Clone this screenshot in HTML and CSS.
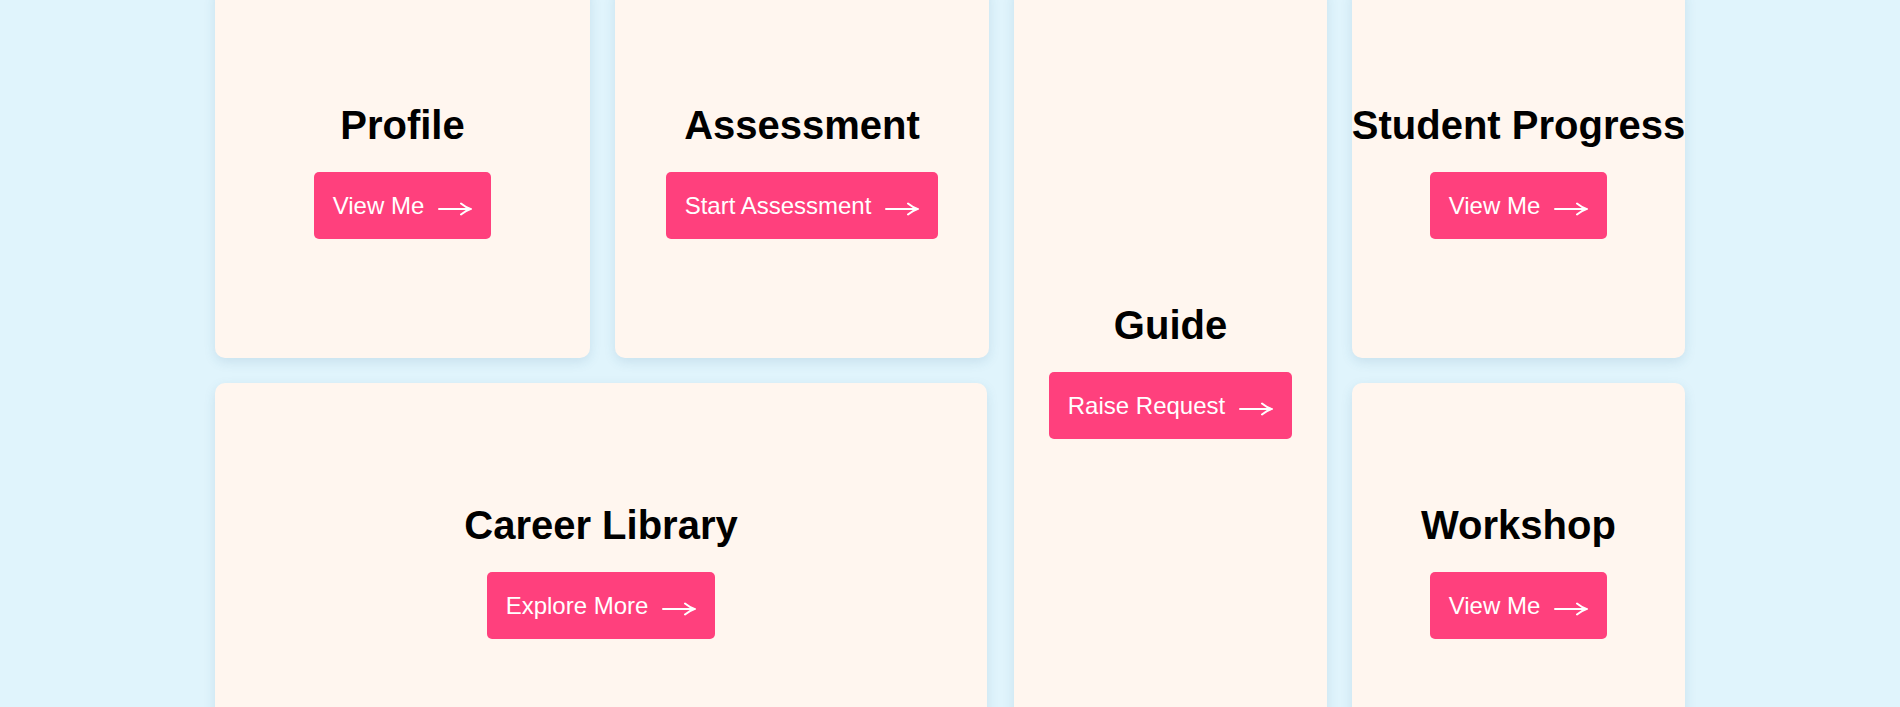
FILE: index.html
```html
<!DOCTYPE html>
<html lang="en">
<head>
<meta charset="utf-8">
<title>Dashboard</title>
<link rel="stylesheet" href="styles.css">
</head>
<body>
<main class="dashboard">
  <section class="card card-profile">
    <h2 class="card-title">Profile</h2>
    <a class="card-btn" href="#">View Me
      <svg class="arrow" viewBox="0 0 34 16" width="34" height="16"><path d="M1 8H32M23 2.5Q28 6.5 32.5 8Q28 9.5 23 13.5" fill="none" stroke="#fff" stroke-width="2" stroke-linecap="round"/></svg>
    </a>
  </section>
  <section class="card card-assessment">
    <h2 class="card-title">Assessment</h2>
    <a class="card-btn" href="#">Start Assessment
      <svg class="arrow" viewBox="0 0 34 16" width="34" height="16"><path d="M1 8H32M23 2.5Q28 6.5 32.5 8Q28 9.5 23 13.5" fill="none" stroke="#fff" stroke-width="2" stroke-linecap="round"/></svg>
    </a>
  </section>
  <section class="card card-guide">
    <h2 class="card-title">Guide</h2>
    <a class="card-btn" href="#">Raise Request
      <svg class="arrow" viewBox="0 0 34 16" width="34" height="16"><path d="M1 8H32M23 2.5Q28 6.5 32.5 8Q28 9.5 23 13.5" fill="none" stroke="#fff" stroke-width="2" stroke-linecap="round"/></svg>
    </a>
  </section>
  <section class="card card-progress">
    <h2 class="card-title">Student Progress</h2>
    <a class="card-btn" href="#">View Me
      <svg class="arrow" viewBox="0 0 34 16" width="34" height="16"><path d="M1 8H32M23 2.5Q28 6.5 32.5 8Q28 9.5 23 13.5" fill="none" stroke="#fff" stroke-width="2" stroke-linecap="round"/></svg>
    </a>
  </section>
  <section class="card card-career">
    <h2 class="card-title">Career Library</h2>
    <a class="card-btn" href="#">Explore More
      <svg class="arrow" viewBox="0 0 34 16" width="34" height="16"><path d="M1 8H32M23 2.5Q28 6.5 32.5 8Q28 9.5 23 13.5" fill="none" stroke="#fff" stroke-width="2" stroke-linecap="round"/></svg>
    </a>
  </section>
  <section class="card card-workshop">
    <h2 class="card-title">Workshop</h2>
    <a class="card-btn" href="#">View Me
      <svg class="arrow" viewBox="0 0 34 16" width="34" height="16"><path d="M1 8H32M23 2.5Q28 6.5 32.5 8Q28 9.5 23 13.5" fill="none" stroke="#fff" stroke-width="2" stroke-linecap="round"/></svg>
    </a>
  </section>
</main>
</body>
</html>
```

FILE: styles.css
```css
html, body {
  margin: 0;
  padding: 0;
}

body {
  background: #e0f4fc;
  font-family: "Liberation Sans", Arial, sans-serif;
  color: #000;
}

.dashboard {
  display: grid;
  grid-template-columns: 375px 374px 313px 333px;
  grid-template-rows: 375px 375px;
  gap: 25px;
  justify-content: center;
  margin-top: -17px;
}

.card {
  background: #fff6ef;
  border-radius: 10px;
  box-shadow: 0 4px 12px rgba(40, 100, 140, 0.13);
  display: flex;
  flex-direction: column;
  align-items: center;
  justify-content: center;
  min-width: 0;
}

.card-profile { grid-column: 1; grid-row: 1; }
.card-assessment { grid-column: 2; grid-row: 1; }
.card-guide { grid-column: 3; grid-row: 1 / span 2; }
.card-progress { grid-column: 4; grid-row: 1; }
.card-career { grid-column: 1 / span 2; grid-row: 2; margin-right: 2px; }
.card-workshop { grid-column: 4; grid-row: 2; }

.card-title {
  margin: 0 0 24px;
  font-size: 40px;
  font-weight: 700;
  line-height: 46px;
  white-space: nowrap;
}

.card-btn {
  display: inline-flex;
  align-items: center;
  gap: 14px;
  height: 67px;
  box-sizing: border-box;
  padding: 0 19px;
  background: #ff407d;
  color: #fff;
  font-size: 24px;
  text-decoration: none;
  border-radius: 5px;
}

.arrow {
  display: block;
  margin-top: 7px;
}
```
